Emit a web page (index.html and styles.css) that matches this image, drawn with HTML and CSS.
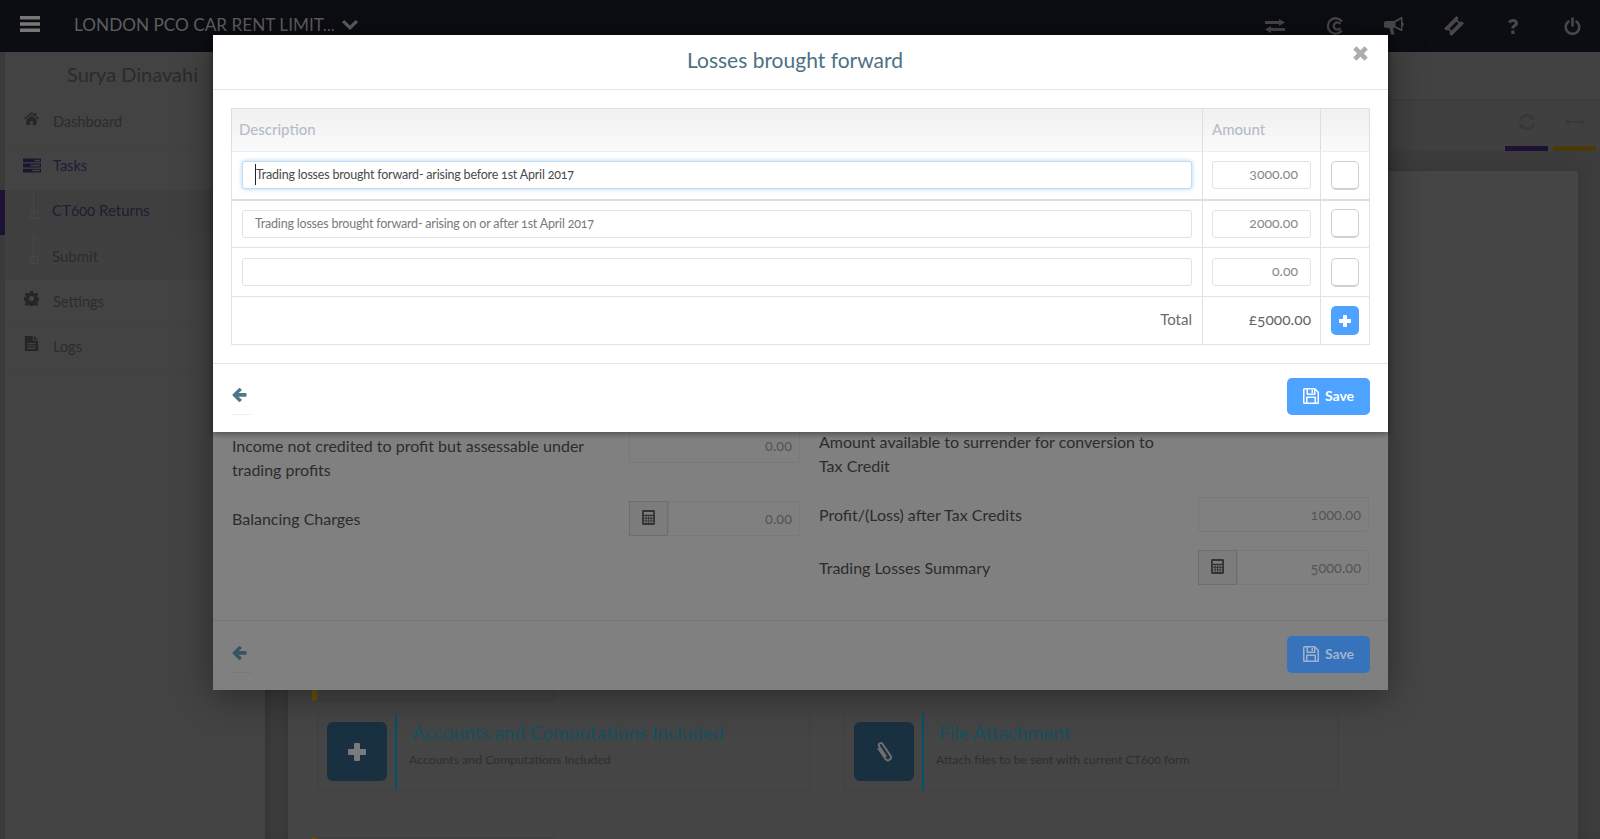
FILE: index.html
```html
<!DOCTYPE html>
<html lang="en">
<head>
<meta charset="utf-8">
<title>Losses brought forward</title>
<link rel="stylesheet" href="styles.css">
</head>
<body>
<svg class="defs" width="0" height="0" aria-hidden="true">
  <symbol id="i-calc" viewBox="0 0 14 16"><path fill-rule="evenodd" d="M1.500 0h11A1.500 1.500 0 0 1 14 1.500v13a1.500 1.500 0 0 1-1.500 1.500h-11A1.500 1.500 0 0 1 0 14.500v-13A1.500 1.500 0 0 1 1.500 0zM2 2v3h10V2zM2 6.500v1.800h2V6.500zM5 6.500v1.800h1.700V6.500zM7.700 6.500v1.800h1.700V6.500zM10.300 6.500v1.800H12V6.500zM2 9.300v1.800h2V9.300zM5 9.300v1.800h1.700V9.300zM7.700 9.300v1.800h1.700V9.300zM10.300 9.300v1.800H12V9.300zM2 12.100V14h2v-1.900zM5 12.100V14h1.700v-1.900zM7.700 12.100V14h1.700v-1.900zM10.300 12.100V14H12v-1.900z"/></symbol>
  <symbol id="i-save" viewBox="0 0 16 16"><path fill-rule="evenodd" d="M1.500 0H12l4 4v10.500a1.500 1.500 0 0 1-1.500 1.500h-13A1.500 1.500 0 0 1 0 14.500v-13A1.500 1.500 0 0 1 1.500 0zM1.500 1.500v13H3V9.500A1 1 0 0 1 4 8.500h8a1 1 0 0 1 1 1v5h1.500V4.700L12.500 2.200V6a1 1 0 0 1-1 1H4.500a1 1 0 0 1-1-1V1.500zM5 1.500V5.500h6v-4zM8.500 2h1.500v3H8.500zM4.500 10v4.500h7V10z"/></symbol>
  <symbol id="i-back" viewBox="0 0 16 16"><path d="M8.700 1.300l1.300 1.300a1 1 0 0 1 0 1.400L7 6.500h7.500a1 1 0 0 1 1 1v2a1 1 0 0 1-1 1H7l3 2.600a1 1 0 0 1 0 1.400l-1.300 1.200a1 1 0 0 1-1.400 0L.8 9.200a1 1 0 0 1 0-1.400l6.500-6.500a1 1 0 0 1 1.400 0z"/></symbol>
  <symbol id="i-plus" viewBox="0 0 14 14"><path d="M5.500 0h3A.8.8 0 0 1 9.300.8v3.900h3.900a.8.8 0 0 1 .8.800v3a.8.8 0 0 1-.8.800H9.300v3.900a.8.8 0 0 1-.8.800h-3a.8.8 0 0 1-.8-.8V9.300H.8A.8.8 0 0 1 0 8.500v-3a.8.8 0 0 1 .8-.8h3.900V.8A.8.8 0 0 1 5.500 0z"/></symbol>
</svg>

<div class="app">
  <header class="topbar">
    <svg class="burger" viewBox="0 0 20 16"><path d="M0 0h20v3.500H0zM0 6.200h20v3.500H0zM0 12.500h20V16H0z"/></svg>
    <span class="company">LONDON PCO CAR RENT LIMIT...</span>
    <svg class="chevron" viewBox="0 0 16 10"><path d="M0 2.300L2.200 0 8 5.600 13.800 0 16 2.300 8 10z"/></svg>
    <nav class="top-icons">
      <span class="top-icon"><svg width="20" height="14" viewBox="0 0 20 14"><path d="M14 0l6 3.500L14 7V5H0V2h14zM6 7v2h14v3H6v2L0 10.500z"/></svg></span>
      <span class="top-icon"><svg width="18" height="18" viewBox="0 0 17 17"><path fill="none" stroke="currentColor" stroke-width="2.200" d="M15 4.200A7.300 7.300 0 1 0 15 12.800M13.500 6.600a3.400 3.400 0 1 0 0 3.800"/></svg></span>
      <span class="top-icon"><svg width="20" height="18" viewBox="0 0 20 18"><path d="M17 0h1.500v14H17l-6-3H9l1.500 6.500H7L5.500 11H3a3 3 0 0 1 0-7h7zM17 2.500l-5.500 2.700v4l5.500 2.500zM18.500 5a2.500 2.500 0 0 1 0 4.500z"/></svg></span>
      <span class="top-icon"><svg width="20" height="20" viewBox="0 0 20 20"><path fill-rule="evenodd" d="M12.500 0l2 2a2 2 0 0 0 3.200 3.200l2.300 2.300L7.500 20l-2.200-2.300a2 2 0 0 0-3-3L0 12.500zM12.500 5.500L5.500 12.500l2 2 7-7z"/></svg></span>
      <span class="top-icon"><svg width="10" height="15" viewBox="0 0 10 15"><path d="M5 0c3 0 5 1.700 5 4.200 0 2-1.200 2.800-2.300 3.500-.8.500-1.200.8-1.200 1.800H3.300c0-2 .8-2.900 2-3.700.8-.5 1.300-.9 1.300-1.500 0-.7-.6-1.200-1.600-1.200S3.200 3.500 2.500 4.600L0 2.800C1 1 2.700 0 5 0zM3.300 11.500h3.200V15H3.300z"/></svg></span>
      <span class="top-icon"><svg width="17" height="18" viewBox="0 0 17 18"><path fill="none" stroke="currentColor" stroke-width="2.600" stroke-linecap="round" d="M4.500 4.500a6.800 6.800 0 1 0 8 0M8.500 1.500v7"/></svg></span>
    </nav>
  </header>

  <div class="layout">
    <aside class="sidebar">
      <div class="user">Surya Dinavahi</div>
      <a class="nav-item">
        <svg class="nav-icon" viewBox="0 0 16 14"><path d="M8 0l3 2.600V1h2v3.400L16 7l-.9 1L8 2 .9 8 0 7zM2.500 8.300L8 3.600l5.500 4.700V14H9.500v-4h-3v4h-4z"/></svg>
        <span>Dashboard</span>
      </a>
      <a class="nav-item nav-open">
        <svg class="nav-icon nav-icon-wide" viewBox="0 0 17 13"><path fill-rule="evenodd" d="M0 0h17v3.500H0zM11 1v1.500h5V1zM0 4.700h17v3.600H0zM7 5.700v1.600h9V5.700zM0 9.500h17V13H0zM9 10.500V12h7v-1.500z"/></svg>
        <span>Tasks</span>
      </a>
      <div class="subnav">
        <a class="sub-item sub-active"><span>CT600 Returns</span></a>
        <a class="sub-item"><span>Submit</span></a>
      </div>
      <a class="nav-item">
        <svg class="nav-icon" viewBox="0 0 16 16"><path fill-rule="evenodd" d="M6.500 0h3l.4 2.200 1.500.6L13.200 1.500l2.100 2.100-1.300 1.800.6 1.500 2.200.4v3l-2.200.4-.6 1.500 1.300 1.800-2.100 2.100-1.800-1.300-1.500.6-.4.600h-3l-.4-.6-1.500-.6-1.800 1.300L.7 14.100 2 12.300l-.6-1.500L0 9.800v-3l1.400-.4.600-1.500L.7 3.600l2.100-2.100 1.800 1.300 1.500-.6zM8 5.300a2.700 2.700 0 1 0 0 5.400 2.700 2.700 0 0 0 0-5.400z"/></svg>
        <span>Settings</span>
      </a>
      <a class="nav-item">
        <svg class="nav-icon" viewBox="0 0 15 17"><path fill-rule="evenodd" d="M0 0h9v5.500h6V17H0zM3 8v1.300h9V8zM3 10.700V12h9v-1.300zM3 13.400v1.300h9v-1.300zM10.300 0L15 4.300h-4.700z"/></svg>
        <span>Logs</span>
      </a>
    </aside>

    <main class="main">
      <div class="main-head"></div>
      <div class="main-sub">
        <div class="tab tab-purple">
          <svg width="18" height="18" viewBox="0 0 18 18"><path fill="none" stroke="currentColor" stroke-width="2.500" d="M2 8a7 7 0 0 1 12-3.500M16 10a7 7 0 0 1-12 3.500"/><path fill="currentColor" d="M16.500 1v6h-6zM1.500 17v-6h6z"/></svg>
        </div>
        <div class="tab tab-yellow">
          <svg width="20" height="8" viewBox="0 0 20 8"><path fill="currentColor" d="M4 0v3h12V0l4 4-4 4V5H4v3L0 4z"/></svg>
        </div>
      </div>
      <section class="card">
        <div class="tile-short"></div>
        <div class="tile-row">
          <article class="tile">
            <div class="tile-icon"><svg width="18" height="18"><use href="#i-plus"/></svg></div>
            <div class="tile-text">
              <h3>Accounts and Computations Included</h3>
              <p>Accounts and Computations Included</p>
            </div>
          </article>
          <article class="tile tile-file">
            <div class="tile-icon"><svg width="18" height="22" viewBox="0 0 18 22"><path fill="none" stroke="currentColor" stroke-width="2" d="M3 7l7.500 11a3 3 0 0 0 5-3.300L7.500 3A2 2 0 0 0 4.200 5.300l7 10.500"/></svg></div>
            <div class="tile-text">
              <h3>File Attachment</h3>
              <p>Attach files to be sent with current CT600 form</p>
            </div>
          </article>
        </div>
        <div class="tile-short tile-next"></div>
      </section>
    </main>
  </div>
</div>

<section class="modal modal-back">
  <div class="back-body">
    <div class="back-col">
      <div class="back-row back-row-a">
        <label>Income not credited to profit but assessable under trading profits</label>
        <div class="dim-input dim-input-wide">0.00</div>
      </div>
      <div class="back-row back-row-b">
        <label>Balancing Charges</label>
        <div class="dim-group">
          <span class="dim-addon"><svg width="13" height="15"><use href="#i-calc"/></svg></span>
          <div class="dim-input">0.00</div>
        </div>
      </div>
    </div>
    <div class="back-col back-col-right">
      <div class="back-row back-row-c">
        <label>Amount available to surrender for conversion to Tax Credit</label>
      </div>
      <div class="back-row back-row-d">
        <label>Profit/(Loss) after Tax Credits</label>
        <div class="dim-input dim-input-wide">1000.00</div>
      </div>
      <div class="back-row back-row-e">
        <label>Trading Losses Summary</label>
        <div class="dim-group">
          <span class="dim-addon"><svg width="13" height="15"><use href="#i-calc"/></svg></span>
          <div class="dim-input">5000.00</div>
        </div>
      </div>
    </div>
  </div>
  <footer class="modal-foot modal-foot-dim">
    <a class="back-link"><svg width="15" height="15"><use href="#i-back"/></svg></a>
    <button class="save-btn"><svg width="16" height="16"><use href="#i-save"/></svg>Save</button>
  </footer>
</section>

<section class="modal modal-front">
  <header class="modal-head">
    <h2>Losses brought forward</h2>
    <svg class="close" viewBox="0 0 14 14"><path d="M3.300.2L7 3.900 10.700.2l3.100 3.100L10.100 7l3.700 3.700-3.100 3.100L7 10.100l-3.700 3.700-3.100-3.100L3.900 7 .2 3.300z"/></svg>
  </header>
  <div class="modal-body">
    <table class="losses">
      <colgroup><col class="col-desc"><col class="col-amt"><col class="col-act"></colgroup>
      <thead>
        <tr><th>Description</th><th class="th-amt">Amount</th><th></th></tr>
      </thead>
      <tbody>
        <tr class="row-first">
          <td><div class="field field-focus"><span class="caret"></span>Trading losses brought forward- arising before 1st April 2017</div></td>
          <td><div class="field field-num">3000.00</div></td>
          <td><span class="check"></span></td>
        </tr>
        <tr>
          <td><div class="field">Trading losses brought forward- arising on or after 1st April 2017</div></td>
          <td><div class="field field-num">2000.00</div></td>
          <td><span class="check"></span></td>
        </tr>
        <tr class="row-third">
          <td><div class="field"></div></td>
          <td><div class="field field-num">0.00</div></td>
          <td><span class="check"></span></td>
        </tr>
        <tr class="row-total">
          <td class="total-label">Total</td>
          <td class="total-value">£5000.00</td>
          <td><span class="add-btn"><svg width="12" height="12"><use href="#i-plus"/></svg></span></td>
        </tr>
      </tbody>
    </table>
  </div>
  <footer class="modal-foot modal-foot-front">
    <a class="back-link"><svg width="15" height="15"><use href="#i-back"/></svg></a>
    <button class="save-btn"><svg width="16" height="16"><use href="#i-save"/></svg>Save</button>
  </footer>
</section>
</body>
</html>
```
FILE: styles.css
```css
* { box-sizing: border-box; }
html, body { height: 100%; }
body {
  margin: 0;
  height: 839px;
  overflow: hidden;
  background: #424242;
  font-family: Lato, "Open Sans", sans-serif;
  font-variant-numeric: oldstyle-nums;
  color: #333;
}
.defs { position: absolute; }

/* dimmed application behind the dialogs */
.app { display: flex; flex-direction: column; height: 839px; }
.topbar {
  flex: 0 0 52px;
  display: flex;
  align-items: center;
  background: #0b0d12;
  padding-left: 20px;
}
.burger { width: 20px; height: 16px; fill: #777; margin-right: 34px; margin-top: -5px; }
.company { font-size: 17.200px; color: #5e5e5e; white-space: nowrap; margin-top: -4px; }
.chevron { width: 16px; height: 10px; fill: #5e5e5e; margin-left: 7px; margin-top: -3px; }
.top-icons { margin-left: auto; margin-right: -2px; display: flex; }
.top-icon {
  width: 59.400px;
  display: flex;
  justify-content: center;
  align-items: center;
  color: #474747;
  fill: #474747;
}

.layout { flex: 1; display: flex; min-height: 0; }
.sidebar {
  flex: 0 0 265px;
  background: #434343;
  border-left: 5px solid #3a3a3a;
  color: #2a2a2a;
}
.user {
  height: 48px;
  line-height: 44px;
  padding-left: 62px;
  font-size: 20px;
  color: #2b2b2b;
}
.nav-item {
  display: flex;
  align-items: center;
  height: 45px;
  padding: 0 0 2px 18px;
  font-size: 14.500px;
  border-bottom: 1px solid #414141;
  color: #2c2c2c;
}
.nav-icon { width: 15px; height: 15px; fill: #262626; margin-right: 14px; margin-top: -5px; margin-left: 1px; }
.nav-icon-wide { width: 18px; margin-left: 0; margin-right: 12px; margin-top: -1px; fill: #1d1530; }
.nav-open { color: #221b33; border-bottom: 0; padding-bottom: 4px; }
.subnav { background: #404040; }
.sub-item {
  position: relative;
  display: flex;
  align-items: center;
  height: 45px;
  padding: 0 0 4px 47px;
  font-size: 15px;
  color: #2c2c2c;
}
.sub-item::before {
  content: "";
  position: absolute;
  left: 28px;
  top: 0;
  height: 28px;
  border-left: 1px solid #474747;
}
.sub-item::after {
  content: "";
  position: absolute;
  left: 25px;
  top: 21px;
  width: 6px;
  height: 6px;
  border: 1px solid #474747;
}
.sub-active { background: #3f3f3f; color: #221b33; box-shadow: -5px 0 0 #1d1233; padding-bottom: 6px; }

.main { flex: 1; min-width: 0; background: #3c3c3c; box-shadow: inset 6px 0 8px -4px #333; }
.main-head { height: 48px; border-bottom: 1px solid #3a3a3a; background: #424242; }
.main-sub {
  height: 51px;
  display: flex;
  justify-content: flex-end;
  gap: 5px;
  padding-right: 4px;
  background: #404040;
}
.tab {
  width: 43px;
  display: flex;
  justify-content: center;
  align-items: center;
  color: #383838;
  padding-bottom: 3px;
  border-bottom: 5px solid;
}
.tab-purple { border-color: #1d1233; }
.tab-yellow { border-color: #4a3a07; }
.card {
  margin: 20px 22px 0 23px;
  height: 700px;
  padding: 400px 29px 0 24px;
  background: #454545;
  box-shadow: 0 0 8px #333;
}
.tile-short {
  width: 242px;
  height: 130px;
  border-left: 5px solid #6b5205;
  border-bottom: 1px solid #3f3f3f;
  border-right: 1px solid #3f3f3f;
}
.tile-next { margin-top: 46px; height: 40px; border-top: 1px solid #3f3f3f; }
.tile-row { display: flex; gap: 34px; margin-top: 12px; padding-left: 5px; }
.tile {
  flex: 0 0 493px;
  height: 78px;
  display: flex;
  align-items: stretch;
  padding-left: 9px;
  border: 1px solid #404040;
  border-radius: 3px;
}
.tile-file { flex-basis: 495px; }
.tile-icon {
  width: 60px;
  height: 59px;
  margin-top: 8px;
  border-radius: 6px;
  background: #193040;
  color: #6f6f6f;
  fill: #7b7b7b;
  display: flex;
  justify-content: center;
  align-items: center;
}
.tile-text { margin-left: 8px; border-left: 2px solid #00536a; padding: 6px 0 0 15px; }
.tile-text h3 { margin: 0; font-size: 19px; font-weight: 400; line-height: 26px; color: #17505f; }
.tile-text p { margin: 6px 0 0 -3px; font-size: 12.300px; color: #2e2e2e; }

/* dialogs */
.modal {
  position: absolute;
  left: 213px;
  width: 1175px;
  display: flex;
  flex-direction: column;
}
.modal-back {
  top: 35px;
  height: 655px;
  background: #808080;
  box-shadow: 0 5px 35px rgba(0, 0, 0, .4);
  color: #2c2c2c;
}
.modal-front {
  top: 35px;
  height: 397px;
  background: #fff;
  box-shadow: 0 2px 6px rgba(0, 0, 0, .4);
}
.modal-head {
  position: relative;
  height: 55px;
  border-bottom: 1px solid #e5e5e5;
  display: flex;
  justify-content: center;
  align-items: center;
  padding: 0 11px 5px 0;
}
.modal-head h2 { margin: 0; font-size: 21px; font-weight: 400; color: #4d7184; }
.close { position: absolute; right: 20px; top: 11px; width: 15px; height: 15px; fill: #adadad; }
.modal-body { padding: 18px; height: 274px; border-bottom: 1px solid #e5e5e5; }

.losses { width: 1139px; table-layout: fixed; border-collapse: collapse; font-size: 12.500px; letter-spacing: -.2px; }
.col-amt { width: 118px; }
.col-act { width: 49px; }
.losses th {
  height: 43px;
  text-align: left;
  padding: 0 7px 3px;
  font-size: 15px;
  font-weight: 500;
  letter-spacing: 0;
  color: #b6bdc7;
  background: linear-gradient(#f0f0f0, #fafafa);
  border: 1px solid #dedede;
  border-bottom-color: #e6eef4;
}
.losses th.th-amt { padding-left: 9px; }
.losses td { height: 48px; padding: 0 9px; border: 1px solid #e2e2e2; text-align: center; }
.losses td:first-child { padding: 0 10px; }
.row-first td { border-bottom: 2px solid #dedede; }
.losses .row-third td { height: 49px; }
.field {
  height: 28px;
  line-height: 25px;
  padding-left: 12px;
  text-align: left;
  color: #7a7a7a;
  background: #fff;
  border: 1px solid #e2e2e2;
  border-radius: 3px;
  white-space: nowrap;
}
.field-focus {
  color: #4a4a4a;
  border-color: #c4dcef;
  box-shadow: 0 0 4px rgba(102, 175, 233, .55);
}
.field-num { text-align: right; padding: 0 12px 0 0; font-size: 14px; line-height: 24px; letter-spacing: 0; color: #8a8a8a; }
.caret {
  display: inline-block;
  width: 0;
  height: 21px;
  border-left: 1px solid #1c2230;
  vertical-align: middle;
  margin-top: -3px;
}
.check {
  display: block;
  width: 28px;
  height: 29px;
  margin: 0 auto;
  background: #fff;
  border: 1px solid #cfcfcf;
  border-bottom-width: 2px;
  border-radius: 5px;
}
.losses td.total-label { text-align: right; font-size: 15px; letter-spacing: 0; color: #6b6b6b; padding: 0 10px 4px 0; }
.losses td.total-value { text-align: right; font-size: 15.500px; letter-spacing: 0; color: #666; padding: 0 9px 4px 0; }
.add-btn {
  display: flex;
  justify-content: center;
  align-items: center;
  width: 28px;
  height: 29px;
  margin: 0 auto;
  border-radius: 5px;
  background: #4da3ff;
  fill: #fff;
}

.modal-foot {
  display: flex;
  justify-content: space-between;
  align-items: flex-start;
  height: 68px;
  padding: 15px 18px 0;
}
.modal-foot-front { padding-top: 14px; }
.back-link {
  width: 20px;
  height: 37px;
  display: flex;
  align-items: center;
  fill: #4f7689;
  border-bottom: 1px solid #eee;
  padding: 0 0 3px 1px;
}
.save-btn {
  width: 83px;
  height: 37px;
  display: flex;
  justify-content: center;
  align-items: center;
  gap: 6px;
  padding: 0 0 2px;
  border: 0;
  border-radius: 5px;
  background: #4da3ff;
  color: #fff;
  fill: #fff;
  font: 700 14px Lato, sans-serif;
}

.back-body { position: relative; height: 586px; border-bottom: 1px solid #757575; }
.back-col { position: absolute; left: 0; top: 0; width: 605px; height: 100%; }
.back-col-right { left: auto; right: 0; width: 588px; }
.back-row { position: absolute; left: 19px; right: 18px; display: flex; justify-content: space-between; align-items: center; font-size: 16px; }
.back-row label { line-height: 24px; }
.back-row-a { top: 395px; align-items: flex-start; }
.back-row-a label { width: 380px; margin-top: 4px; }
.back-row-a .dim-input-wide { width: 171px; margin-top: -2px; }
.back-row-b { top: 466px; }
.back-row-c { top: 395px; }
.back-row-c label { width: 350px; }
.back-row-d { top: 462px; right: 19px; }
.back-row-e { top: 515px; right: 19px; }
.back-row-d .dim-input-wide { width: 171px; }
.dim-input {
  width: 132px;
  height: 35px;
  line-height: 33px;
  text-align: right;
  padding-right: 7px;
  font-size: 14.500px;
  color: #555;
  border: 1px solid #797979;
  border-radius: 3px;
}
.dim-group { display: flex; }
.dim-addon {
  width: 39px;
  height: 35px;
  display: flex;
  justify-content: center;
  align-items: center;
  background: #7c7c7c;
  border: 1px solid #6d6d6d;
  fill: #333;
  padding-bottom: 3px;
}
.modal-foot-dim .back-link { fill: #355563; border-bottom-color: #787878; }
.modal-foot-dim .save-btn { background: #3773bb; color: #9fb4cc; fill: #9fb4cc; }
```
